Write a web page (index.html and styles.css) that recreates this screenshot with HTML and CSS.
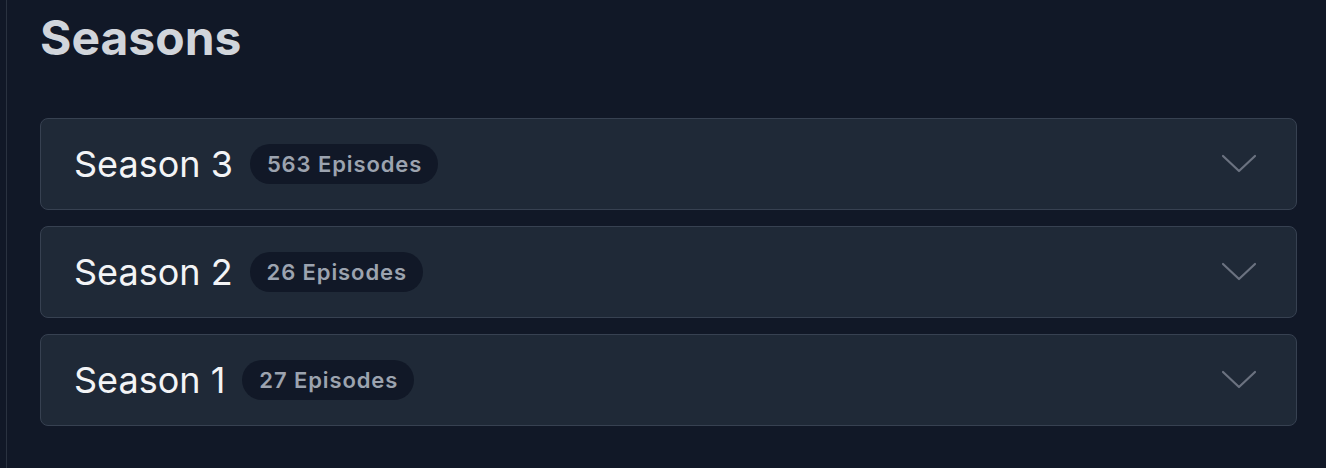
FILE: index.html
```html
<!DOCTYPE html>
<html>
<head>
<meta charset="utf-8">
<link rel="stylesheet" href="styles.css">
</head>
<body>
<main class="page">
  <h2 class="title">Seasons</h2>
  <div class="list">
    <div class="season">
      <div class="season-left">
        <span class="season-name">Season 3</span>
        <span class="badge">563 Episodes</span>
      </div>
      <svg class="chev" width="36" height="20" viewBox="0 0 36 20"><path d="M2 2 L18 17 L34 2" fill="none" stroke="#6b7280" stroke-width="2.2" stroke-linecap="round" stroke-linejoin="round"/></svg>
    </div>
    <div class="season">
      <div class="season-left">
        <span class="season-name">Season 2</span>
        <span class="badge">26 Episodes</span>
      </div>
      <svg class="chev" width="36" height="20" viewBox="0 0 36 20"><path d="M2 2 L18 17 L34 2" fill="none" stroke="#6b7280" stroke-width="2.2" stroke-linecap="round" stroke-linejoin="round"/></svg>
    </div>
    <div class="season">
      <div class="season-left">
        <span class="season-name">Season 1</span>
        <span class="badge">27 Episodes</span>
      </div>
      <svg class="chev" width="36" height="20" viewBox="0 0 36 20"><path d="M2 2 L18 17 L34 2" fill="none" stroke="#6b7280" stroke-width="2.2" stroke-linecap="round" stroke-linejoin="round"/></svg>
    </div>
  </div>
</main>
</body>
</html>
```

FILE: styles.css
```css
html, body {
  margin: 0;
  padding: 0;
  background: #111827;
  height: 100%;
}
body {
  font-family: Inter, "Noto Sans", sans-serif;
}
.page {
  margin-left: 6px;
  border-left: 1px solid #2a3240;
  min-height: 468px;
  box-sizing: border-box;
  padding: 14px 29px 0 33px;
}
.title {
  margin: 0;
  font-size: 48px;
  line-height: 48px;
  font-weight: 700;
  color: #d1d5db;
}
.list {
  margin-top: 56px;
  display: flex;
  flex-direction: column;
  gap: 16px;
}
.season {
  height: 92px;
  box-sizing: border-box;
  background: #1f2937;
  border: 1px solid #374151;
  border-radius: 8px;
  display: flex;
  align-items: center;
  justify-content: space-between;
  padding: 0 39px 0 33px;
}
.season-left {
  display: flex;
  align-items: center;
  gap: 17px;
}
.season-name {
  font-size: 36px;
  color: #f3f4f6;
  font-weight: 400;
}
.badge {
  background: #111827;
  color: #9ca3af;
  font-size: 22px;
  font-weight: 600;
  letter-spacing: 0.9px;
  border-radius: 20px;
  height: 40px;
  line-height: 40px;
  padding: 0 16px 0 17px;
}
.chev {
  display: block;
}
```
